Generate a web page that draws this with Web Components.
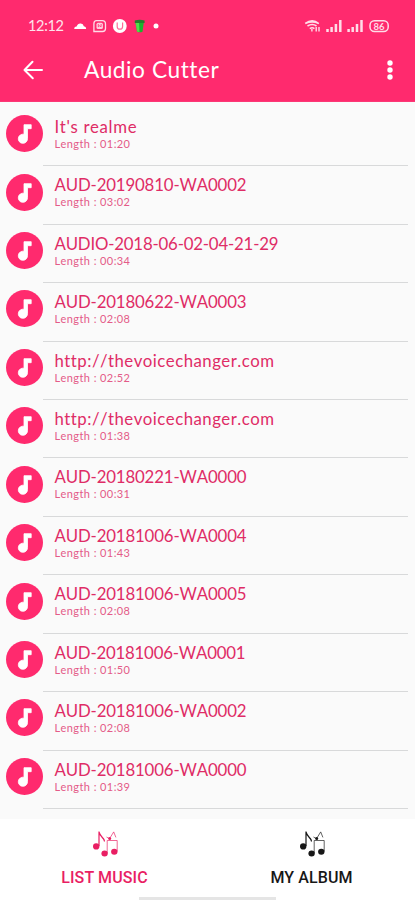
<!DOCTYPE html>
<html lang="en"><head><meta charset="utf-8"><title>Audio Cutter</title>
<style>body{margin:0;background:#fff}</style></head>
<body><audio-app></audio-app>
<script>
class FitText extends HTMLElement{
  constructor(){super();this.attachShadow({mode:'open'}).innerHTML='<style>:host{display:block;white-space:nowrap;width:max-content;font-kerning:none;font-variant-ligatures:none}span{display:inline-block}</style><span><slot></slot></span>';}
  connectedCallback(){
    const s=this.shadowRoot.querySelector('span'),w=+this.getAttribute('width');
    if(w){const n=this.textContent.length;s.style.letterSpacing=((w-s.getBoundingClientRect().width)/(n-1))+'px';}
  }
}
customElements.define('fit-text',FitText);

class StatusBar extends HTMLElement{
  constructor(){super();this.attachShadow({mode:'open'}).innerHTML=`
<style>:host{display:flex;height:40px;color:#ffe3ec;font:14.5px/18px Lato,sans-serif;padding:17px 0 0 28px;box-sizing:border-box}
fit-text{width:46px}svg{display:block;overflow:visible}.r{margin-left:144px}svg text{font:700 9.5px Lato,sans-serif}</style>
<fit-text width="36">12:12</fit-text>
<svg width="86" height="18" viewBox="74 17 86 18">
<path d="M74.300 29q-.3-2.200 2.300-2.400 1.200-3.400 4.200-3 2.500.4 3 2.600 2.400.2 2.400 2.800z" fill="#fff"/>
<path d="M96.500 20.700h5.700q3.300 0 3.300 3.300v4.500q0 3-3 3h-8.600v-7.800q0-3 2.600-3z" fill="none" stroke="#ffdce8" stroke-width="1.300"/>
<rect x="96.500" y="22.700" width="6.400" height="6.400" rx="1.500" fill="#ffd0e0"/><path d="M98.300 24v2.800l1.400-1 1.400 1V24" fill="none" stroke="#ff2a6e" stroke-width=".8"/>
<circle cx="119.800" cy="26" r="6.900" fill="#fff"/><path d="M117.200 22.400v4q0 2.800 2.700 2.800t2.700-2.800v-4" fill="none" stroke="#ff6d9a" stroke-width="1.200"/>
<path d="M135.500 22.500h8.300l-1.300 9.200q-2.700 1-5.400 0z" fill="#18b52d"/><path d="M135.500 22.500h3.500l.5 9.500-2.400-.3z" fill="#52df48"/><path d="M134.800 20.500q4.900-1.700 9.800 0v2.400h-9.800z" fill="#24802c"/>
<circle cx="156" cy="26" r="2.500" fill="#fff"/></svg>
<svg class="r" width="86" height="18" viewBox="304 17 86 18" fill="none" stroke="#ffdce8">
<path d="M305.300 23.500q7-5.400 13.500 0-6.700-3-13.500 0zM307.500 26q4.800-3 9 0M309.800 28.700q2.400-1.800 4.600 0" stroke-width="1.600"/><path d="M311.900 29v2.500M316.200 27v4.500M319 27v4.500" stroke-width="1.400"/>
<path d="M327.500 29v3M331.600 27v5M335.900 24v8M340.300 20v12M348.600 29v3M352.700 27v5M357 24v8M361.500 20v12" stroke-width="2.500"/>
<rect x="370" y="20.700" width="18.200" height="10.800" rx="4.500" stroke-width="1.500"/><text x="373.600" y="29.500" fill="#ffdce8" stroke="none">86</text></svg>`;}
}
customElements.define('status-bar',StatusBar);

class AppHeader extends HTMLElement{
  constructor(){super();this.attachShadow({mode:'open'}).innerHTML=`
<style>:host{display:block;height:102px;background:#ff2a6e;box-sizing:border-box;border-bottom:1px solid #fb3976}
.bar{display:flex;align-items:center;height:60px;padding:0 20px 0 22px;color:#fff}
svg{display:block;flex:none}.title{font:22.700px/28px Lato,sans-serif;margin-left:40px;flex:1}</style>
<status-bar></status-bar><div class="bar">
<svg width="22" height="22" viewBox="0 0 22 22" fill="none" stroke="#fff" stroke-width="2" stroke-linecap="round" stroke-linejoin="round"><path d="M20 11H2.500M10.500 2.700 2.500 11l8.300 8.200"/></svg>
<fit-text class="title" width="134">Audio Cutter</fit-text>
<svg width="10" height="22" viewBox="0 0 10 22" fill="#fff"><circle cx="5" cy="4" r="2.700"/><circle cx="5" cy="11" r="2.700"/><circle cx="5" cy="18" r="2.700"/></svg></div>`;}
}
customElements.define('app-header',AppHeader);

class TrackRow extends HTMLElement{
  connectedCallback(){
    this.attachShadow({mode:'open'}).innerHTML=`
<style>:host{display:flex;height:58.450px;padding-left:6px;box-sizing:border-box}
svg{display:block;width:37px;height:37px;margin-top:7.300px;flex:none}
.body{width:365px;padding:8px 0 0 11.500px;box-sizing:border-box;border-bottom:1.500px solid #d8d9da;color:#df2c66;font-family:Lato,sans-serif}
.name{font-size:16.800px;line-height:21px}.len{font-size:11px;line-height:13px;color:#e45b88}</style>
<svg viewBox="0 0 37 37"><circle cx="18.500" cy="18.500" r="18.500" fill="#ff2a6e"/><path d="M18 9.700h7.200v4h-3.700v10a4.600 4.600 0 1 1-3.500-4.400z" fill="#fff" stroke="#fff" stroke-width=".8" stroke-linejoin="round"/></svg>
<div class="body"><fit-text class="name" width="${this.getAttribute('span')}">${this.getAttribute('name')}</fit-text><fit-text class="len" width="75.500">Length : ${this.getAttribute('length')}</fit-text></div>`;}
}
customElements.define('track-row',TrackRow);

class NavTab extends HTMLElement{
  constructor(){super();this.attachShadow({mode:'open'}).innerHTML=`
<style>:host{display:flex;flex-direction:column;align-items:center;flex:1;padding-top:10px}
svg{display:block}.label{font:500 16px/20px Roboto,sans-serif;margin-top:10px}</style>
<svg width="28" height="29" viewBox="90 829 28 29" fill="currentColor"><ellipse cx="95.200" cy="846.400" rx="3.200" ry="3.100"/><ellipse cx="103.600" cy="853.400" rx="3.200" ry="3"/><ellipse cx="113.300" cy="851.800" rx="3.200" ry="3"/><circle cx="108.700" cy="838.600" r="1.500"/>
<path d="M98 846V831.500M98 832q.8 3 3.300 5.500t2 4" fill="none" stroke="currentColor" stroke-width="1.200"/><path d="M106.200 853v-12.500h10V851.500M105.500 837l3 1.700 4.200-6.800 2.200 5.500" fill="none" stroke="currentColor" stroke-opacity=".75" stroke-width=".9"/></svg>
<fit-text class="label"></fit-text>`;}
  connectedCallback(){
    const old=this.shadowRoot.querySelector('.label'),t=document.createElement('fit-text');
    t.className='label';t.setAttribute('width',this.getAttribute('span'));t.textContent=this.getAttribute('label');old.replaceWith(t);}
}
customElements.define('nav-tab',NavTab);

class AudioApp extends HTMLElement{
  connectedCallback(){
    const tracks=[["It's realme",'01:20',82],['AUD-20190810-WA0002','03:02',192],['AUDIO-2018-06-02-04-21-29','00:34',224],['AUD-20180622-WA0003','02:08',192],['http://thevoicechanger.com','02:52',219.5],['http://thevoicechanger.com','01:38',219.5],['AUD-20180221-WA0000','00:31',192],['AUD-20181006-WA0004','01:43',192],['AUD-20181006-WA0005','02:08',192],['AUD-20181006-WA0001','01:50',191],['AUD-20181006-WA0002','02:08',192],['AUD-20181006-WA0000','01:39',192]];
    this.attachShadow({mode:'open'}).innerHTML=`
<style>:host{display:flex;flex-direction:column;width:415px;height:900px;overflow:hidden;background:#fff}
main{height:717px;padding-top:5.800px;box-sizing:border-box;background:#fafafa;flex:none}
nav{display:flex;height:78px;flex:none}
.home{width:137px;height:3px;background:#e5e5e5;margin-left:139px}</style>
<app-header></app-header><main>${tracks.map(t=>`<track-row name="${t[0]}" length="${t[1]}" span="${t[2]}"></track-row>`).join('')}</main>
<nav><nav-tab label="LIST MUSIC" span="86.500" style="color:#e91e63;padding-left:1px"></nav-tab><nav-tab label="MY ALBUM" span="82" style="color:#171717"></nav-tab></nav><div class="home"></div>`;}
}
customElements.define('audio-app',AudioApp);
</script></body></html>
